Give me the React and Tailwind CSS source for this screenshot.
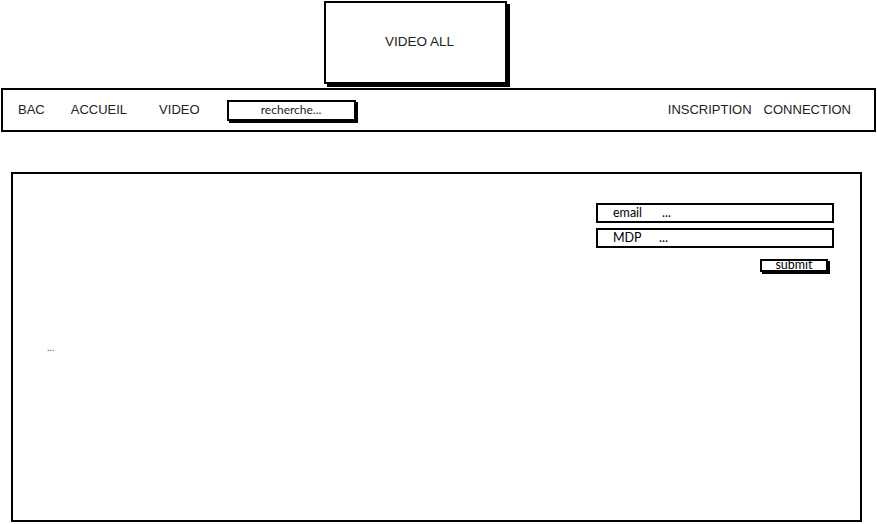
export default function App() {
    return (
        <div className="w-[877px] h-[524px] bg-white overflow-hidden font-['Liberation_Sans',Arial,sans-serif] text-[13px] text-[#222]">
            <div className="flex pt-[1px] pl-[324px]">
                <div className="w-[183px] h-[83px] border-2 border-black bg-white shadow-[3px_3px_0_#000] flex items-center justify-center pl-[8px] text-[13.5px]">
                    VIDEO ALL
                </div>
            </div>

            <nav className="mt-[4px] ml-[1px] w-[875px] h-[44px] border-2 border-black flex items-center justify-between pl-[15px] pr-[23px]">
                <div className="flex items-center">
                    <span>BAC</span>
                    <span className="ml-[26px]">ACCUEIL</span>
                    <span className="ml-[32px]">VIDEO</span>
                    <div className="ml-[27px] w-[129px] h-[21px] border-2 border-black shadow-[2px_2px_0_#000] flex items-center justify-center text-[12px] font-['Lato',sans-serif]">
                        recherche...
                    </div>
                </div>
                <div className="flex items-center gap-[12px]">
                    <span>INSCRIPTION</span>
                    <span>CONNECTION</span>
                </div>
            </nav>

            <main className="mt-[40px] ml-[11px] w-[851px] h-[350px] border-2 border-black pt-[29px] pr-[26px] flex flex-col font-['Lato',sans-serif] text-[12.5px] text-black">
                <div className="self-end w-[238px] flex flex-col gap-[5px]">
                    <div className="h-[20px] border-2 border-black flex items-center pl-[15px]">
                        <span className="w-[49px]">email</span>
                        <span>...</span>
                    </div>
                    <div className="h-[20px] border-2 border-black flex items-center pl-[15px]">
                        <span className="w-[46px]">MDP</span>
                        <span>...</span>
                    </div>
                    <div className="self-end mr-[6px] mt-[6px] w-[68px] h-[13px] border-2 border-black shadow-[2px_2px_0_#000] flex items-center justify-center leading-none">
                        submit
                    </div>
                </div>
                <div className="ml-[34px] mt-[68px] text-[10px] text-[#1a5ea8]">...</div>
            </main>
        </div>
    );
}
